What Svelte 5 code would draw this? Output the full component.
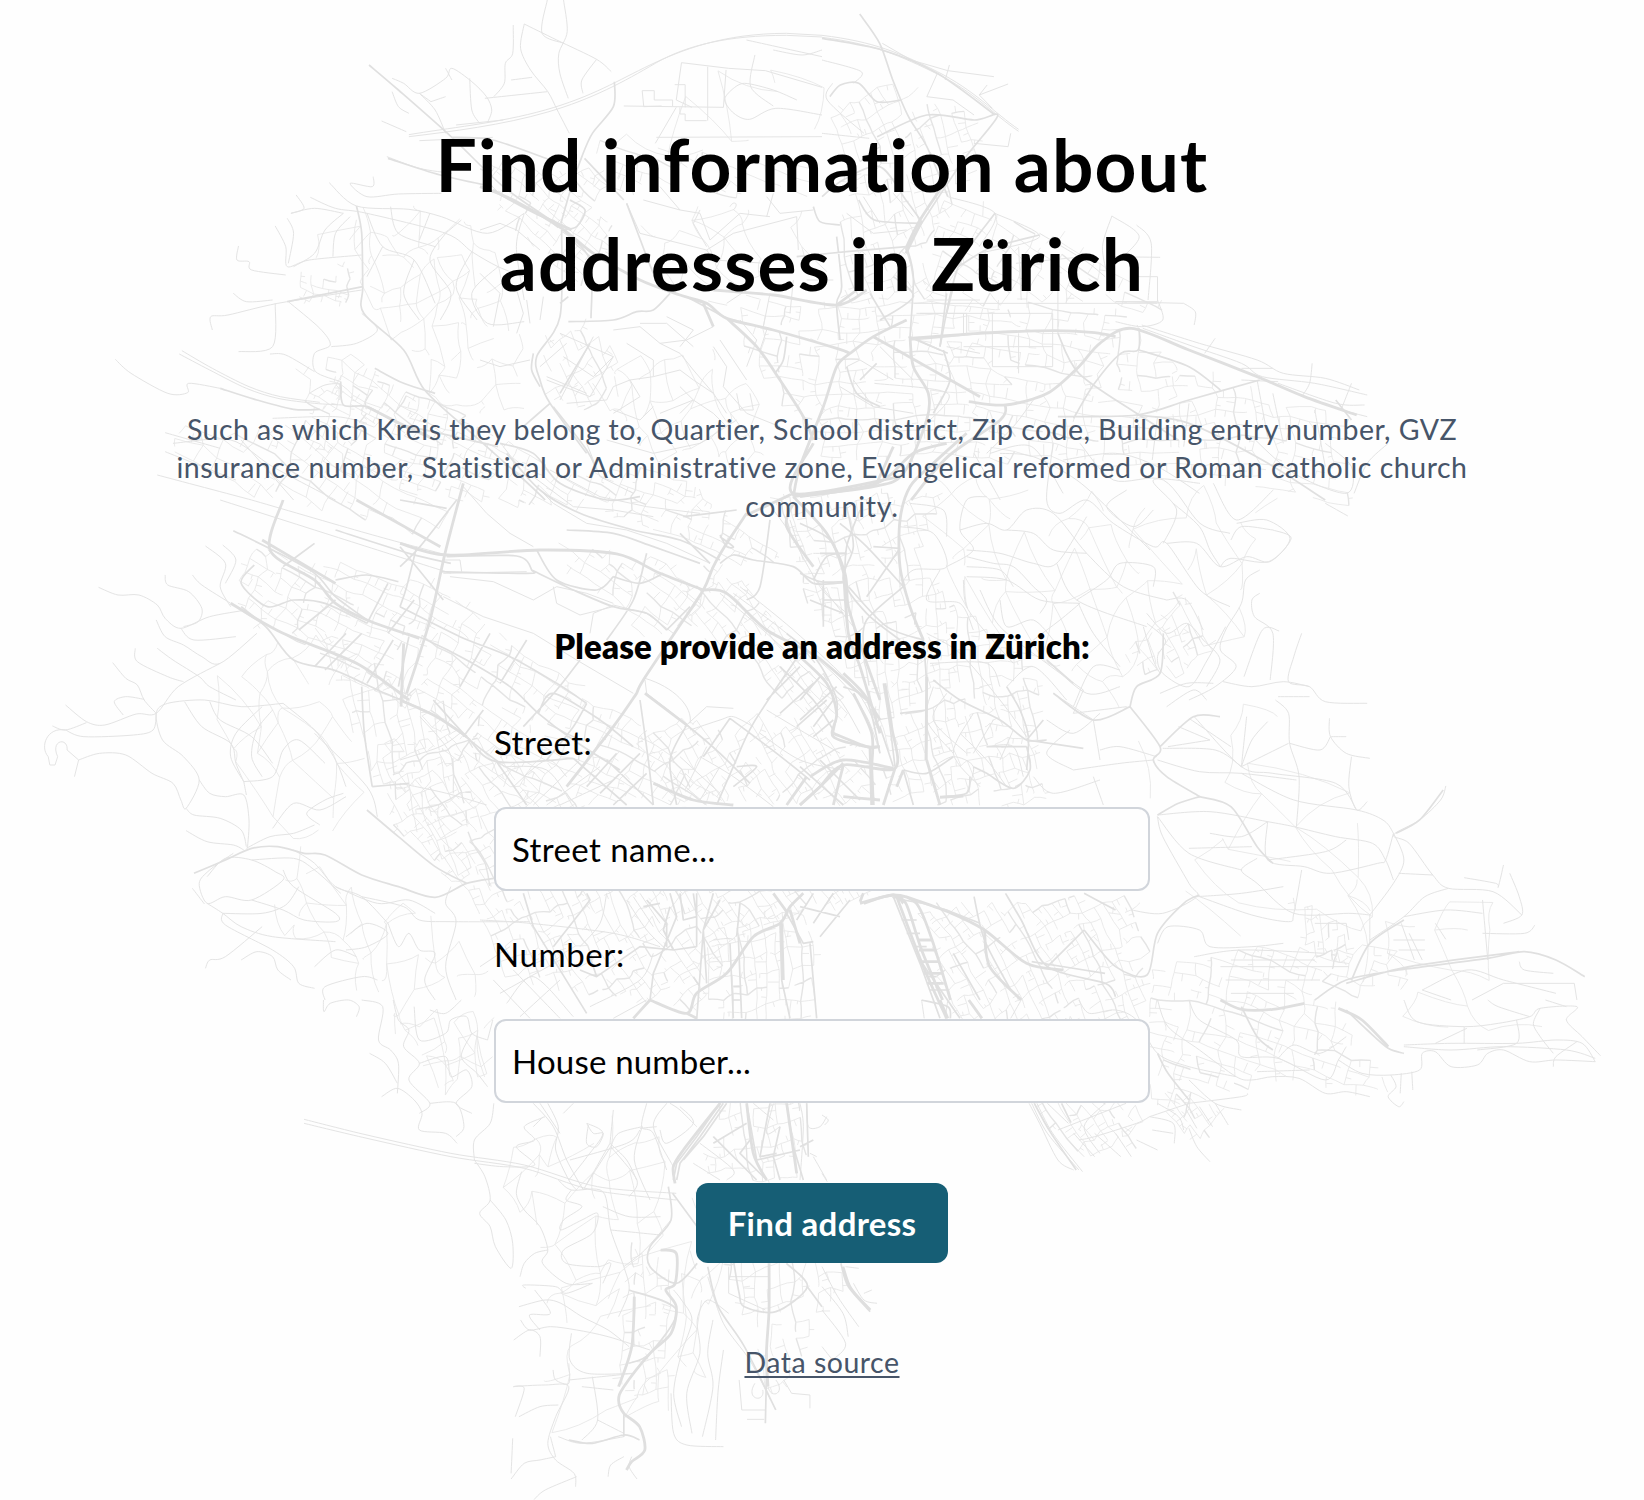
<script>
  // Deterministic noise, so the street web looks the same on every load
  let seed = 71;
  const rnd = () => {
    seed = (seed * 1664525 + 1013904223) % 4294967296;
    return seed / 4294967296;
  };

  const inside = (x, y, poly) => {
    let hit = false;
    for (let i = 0, j = poly.length - 2; i < poly.length; j = i, i += 2) {
      const [xi, yi, xj, yj] = [poly[i], poly[i + 1], poly[j], poly[j + 1]];
      if (yi > y !== yj > y && x < ((xj - xi) * (y - yi)) / (yj - yi) + xi) hit = !hit;
    }
    return hit;
  };

  // Fills a district with a loose mesh of lanes: step = block size, angle in degrees
  function district({ poly, step, ratio = 1.5, angle, jitter, keep, built }) {
    const xs = poly.filter((_, i) => i % 2 === 0);
    const ys = poly.filter((_, i) => i % 2 === 1);
    const cx = (Math.min(...xs) + Math.max(...xs)) / 2;
    const cy = (Math.min(...ys) + Math.max(...ys)) / 2;
    const r = Math.hypot(Math.max(...xs) - cx, Math.max(...ys) - cy);
    const nu = Math.ceil(r / (step * ratio));
    const nv = Math.ceil(r / step);
    const c = Math.cos((angle * Math.PI) / 180);
    const s = Math.sin((angle * Math.PI) / 180);
    const pts = [];
    for (let i = -nu; i <= nu; i++) {
      const row = [];
      for (let j = -nv; j <= nv; j++) {
        const u = (i + (rnd() - 0.5) * jitter) * step * ratio + Math.sin(j * 0.3) * step * 0.5;
        const v = (j + (rnd() - 0.5) * jitter) * step + Math.sin(i * 0.4) * step * 0.5;
        row.push([cx + u * c - v * s, cy + u * s + v * c]);
      }
      pts.push(row);
    }
    const out = { lanes: '', streets: '' };
    const link = (p, q, strong) => {
      const k = rnd();
      if (k > keep || !inside(p[0], p[1], poly) || !inside(q[0], q[1], poly)) return;
      const end = k > keep * 0.85 ? 0.6 : 1;
      const mx = (p[0] + q[0]) / 2 + (rnd() - 0.5) * step * jitter * 0.5;
      const my = (p[1] + q[1]) / 2 + (rnd() - 0.5) * step * jitter * 0.5;
      const ex = p[0] + (q[0] - p[0]) * end;
      const ey = p[1] + (q[1] - p[1]) * end;
      out[strong ? 'streets' : 'lanes'] +=
        `M${p[0].toFixed(1)} ${p[1].toFixed(1)}Q${mx.toFixed(1)} ${my.toFixed(1)} ${ex.toFixed(1)} ${ey.toFixed(1)}`;
      // short cul-de-sacs off the lane
      if (built && rnd() > 0.62) {
        const t = 0.3 + rnd() * 0.4;
        const side = (rnd() > 0.5 ? 1 : -1) * (0.3 + rnd() * 0.3);
        const bx = p[0] + (q[0] - p[0]) * t;
        const by = p[1] + (q[1] - p[1]) * t;
        out.lanes += `M${bx.toFixed(1)} ${by.toFixed(1)}l${((p[1] - q[1]) * side).toFixed(1)} ${((q[0] - p[0]) * side).toFixed(1)}`;
      }
    };
    for (let i = 0; i < pts.length - 1; i++)
      for (let j = 0; j < pts[i].length - 1; j++) {
        link(pts[i][j], pts[i + 1][j], built && j % 5 === 0);
        link(pts[i][j], pts[i][j + 1], built && i % 6 === 0);
      }
    return out;
  }

  // Rounds a surveyed polyline into a curve that still passes through its points
  function curve(d) {
    if (/[HVC]/.test(d)) return d;
    return d
      .split('M')
      .filter(Boolean)
      .map((part) => {
        const p = part.split('L').map((t) => t.trim().split(' ').map(Number));
        let s = `M${p[0][0]} ${p[0][1]}`;
        for (let i = 0; i < p.length - 1; i++) {
          const a = p[i - 1] ?? p[i];
          const b = p[i];
          const c = p[i + 1];
          const e = p[i + 2] ?? c;
          const k = 0.15;
          s += `C${b[0] + (c[0] - a[0]) * k} ${b[1] + (c[1] - a[1]) * k} ${c[0] - (e[0] - b[0]) * k} ${c[1] - (e[1] - b[1]) * k} ${c[0]} ${c[1]}`;
        }
        return s;
      })
      .join('');
  }

  const wood = (angle, step, poly) => ({ poly, step, angle, jitter: 0.9, keep: 0.8, ratio: 1.4 });
  const town = (angle, step, poly) => ({ poly, step, angle, jitter: 0.45, keep: 0.8, built: true });

  const districts = [
    wood(75, 16, [330, 195, 390, 195, 470, 215, 500, 330, 500, 400, 430, 400, 370, 330, 340, 280]),
    wood(60, 22, [275, 215, 350, 190, 345, 250, 280, 260]),
    wood(20, 40, [430, 90, 590, 85, 700, 40, 860, 60, 800, 150, 560, 150, 420, 130]),
    wood(40, 24, [600, 195, 790, 190, 800, 280, 640, 285]),
    wood(65, 18, [540, 340, 690, 330, 760, 430, 720, 470, 580, 430]),
    wood(55, 28, [870, 450, 1280, 465, 1240, 510, 1215, 560, 1190, 610, 1110, 640, 1080, 720, 960, 620, 880, 540]),
    wood(20, 40, [1080, 690, 1200, 640, 1280, 700, 1320, 790, 1330, 840, 1300, 900, 1120, 900, 1100, 780]),
    wood(10, 34, [1270, 830, 1430, 860, 1430, 940, 1500, 960, 1510, 1010, 1330, 1000, 1250, 930]),
    wood(50, 26, [170, 640, 300, 600, 350, 650, 370, 800, 270, 800, 190, 700]),
    wood(70, 22, [240, 830, 300, 800, 420, 870, 480, 900, 470, 1070, 410, 1060, 370, 990, 290, 930]),
    wood(80, 18, [370, 960, 480, 960, 480, 1080, 410, 1050]),
    wood(80, 25, [470, 1060, 650, 1060, 640, 1180, 600, 1280, 520, 1250, 480, 1150]),
    wood(70, 36, [500, 1230, 660, 1160, 690, 1260, 660, 1370, 490, 1370]),
    wood(80, 20, [640, 1170, 690, 1180, 690, 1330, 640, 1330]),
    town(25, 10, [280, 350, 380, 360, 540, 450, 640, 440, 760, 540, 700, 540, 560, 490, 420, 480, 290, 440]),
    town(30, 15, [170, 400, 290, 400, 430, 490, 420, 520, 250, 480, 160, 440]),
    town(30, 11, [215, 550, 230, 520, 300, 530, 420, 560, 600, 680, 700, 770, 470, 770, 390, 680, 240, 600]),
    town(32, 11, [500, 510, 700, 540, 660, 600, 620, 625, 580, 570]),
    town(50, 9, [650, 560, 700, 540, 810, 670, 820, 700, 740, 670, 720, 630, 660, 620]),
    town(55, 10, [640, 680, 700, 690, 740, 670, 840, 720, 840, 770, 640, 770, 600, 700]),
    town(4, 12, [670, 280, 1080, 290, 1100, 330, 1180, 360, 1290, 400, 1290, 490, 1200, 470, 1100, 450, 900, 440, 780, 440, 720, 350]),
    town(70, 11, [790, 100, 850, 70, 950, 120, 950, 140, 880, 240, 900, 290, 800, 290, 800, 190]),
    town(28, 12, [890, 190, 940, 190, 1100, 270, 1110, 300, 880, 290]),
    town(35, 9, [450, 150, 580, 160, 590, 230, 560, 290, 470, 200]),
    town(60, 11, [515, 320, 560, 300, 600, 340, 560, 400, 520, 380]),
    town(20, 14, [560, 130, 780, 150, 780, 190, 580, 190]),
    town(80, 10, [730, 470, 900, 470, 880, 540, 990, 640, 1000, 770, 850, 770, 830, 680, 760, 560]),
    town(60, 10, [360, 700, 470, 700, 560, 770, 850, 770, 840, 860, 700, 900, 670, 970, 480, 940, 440, 850, 370, 800]),
    town(75, 12, [290, 590, 420, 660, 480, 850, 430, 840, 350, 740]),
    town(86, 11, [660, 880, 780, 860, 778, 960, 770, 1060, 775, 1130, 660, 1130, 690, 1040]),
    town(62, 10, [870, 860, 1090, 850, 1100, 930, 1090, 1100, 1030, 1110, 960, 1040, 895, 940]),
    town(15, 12, [1080, 920, 1220, 900, 1340, 890, 1360, 940, 1270, 960, 1330, 1040, 1310, 1050, 1230, 1030, 1100, 1080]),
    town(60, 11, [1060, 620, 1120, 560, 1170, 600, 1140, 660, 1090, 650]),
    town(80, 12, [650, 1120, 775, 1130, 815, 1230, 770, 1290, 735, 1340, 700, 1240]),
    town(85, 11, [595, 1180, 640, 1200, 640, 1350, 590, 1330]),
    town(10, 8, [275, 255, 340, 250, 342, 290, 278, 298]),
    town(30, 11, [305, 330, 350, 340, 460, 440, 310, 390]),
    town(80, 8, [1230, 850, 1280, 880, 1290, 920, 1250, 920]),
    town(45, 9, [1110, 1040, 1170, 1050, 1160, 1095, 1110, 1078])
  ].map(district);

  const sheets = [
    {
      at: 'translate(0 0) scale(.52423 .33333)',
      fine: [
        'M1044 0L1034 100L1076 130M1075 0L1082 95L1066 160L1068 220L1084 295M979 75L978 160L964 190L962 250L942 290M1000 72L993 145L1012 210L1045 275L1063 330L1086 400M1000 72L1062 120L1138 178L1166 215M1138 178L1110 240L1112 280',
        'M748 235L770 250L800 280L850 235L862 205L900 245L928 290L938 330L930 368M748 275L760 320L780 340M850 205L862 240M800 280L830 330L850 400M728 363L775 395M800 280L822 305M925 295L1044 275M975 240L1015 232M822 305L850 290M896 235L900 330L915 370',
        'M780 404C850 385 950 370 1040 330S1180 240 1240 195S1380 100 1500 100L1568 106M780 410C860 395 960 375 1045 336S1190 245 1250 190S1390 106 1500 106L1568 111M800 422L940 412M870 375L960 360',
        'M1300 188L1390 205L1460 212L1568 262M1300 188L1290 300L1320 322M1350 200V362M1225 272L1228 320L1262 318M1225 272H1248V300H1283V318M1287 254H1307V322M1190 318L1380 322L1385 210M1297 322V342H1307V362H1348M1250 430L1290 322M1252 412L1568 410',
        'M1440 165L1432 260L1475 318M1395 270L1420 250L1475 270L1520 300M1395 270L1382 300L1400 340L1430 358L1480 325L1568 345M1424 120L1568 170M1475 150L1530 165L1568 150',
        'M738 470L800 505L862 520M712 530L710 560L668 550L700 590L760 582L842 580M628 548L680 618L780 628L842 650L930 700L1000 640M592 592L640 625L700 640L850 700L900 755L950 800L1000 830M565 585L580 625L555 640M548 655L560 700L550 790M525 678L545 740L548 800L590 780L690 765M555 640L600 625L655 640M655 640L620 690L600 760L560 800M668 650L640 700L635 770M455 738L452 780L475 785L480 810L545 825M445 880L470 905L520 900M405 990L402 950L435 945L530 910L690 870M525 910L520 1040L455 1055M550 905L610 985L630 1035L600 1060L602 1115L650 1145',
        'M700 640L730 740L790 780L830 910M730 740L700 830M790 780L770 880L800 960M850 700L820 780L860 880L840 960M900 755L870 860L910 960M950 800L900 880L930 970L1000 965M1000 640L985 740L1000 900M745 620L760 700L830 740M820 640L800 720M880 660L850 700',
        'M220 1078L250 1120L320 1180L358 1178L360 1150L420 1165M342 1062L400 1110L470 1165L530 1195L600 1210L655 1215M347 1052L405 1105L475 1160L535 1190L610 1207M590 1180L620 1155L650 1155L648 1200M515 1062L545 1065L600 1115M690 940L720 990L680 1030L632 1040',
        'M315 1298L420 1345M315 1355L450 1440M300 1425L480 1500M460 1320L560 1500M330 1330L440 1320L520 1400L640 1500M520 1255L640 1250L700 1270'
      ],
      mid: [
        'M704 195L760 270L862 412L960 560L1060 670M692 860L548 905M680 618L690 700L692 860L694 940L770 1050L810 1170L900 1300L1000 1440L1040 1500M1172 245L1170 320L1130 400L1110 470L1090 560L1070 670M1115 475L1190 600M420 1165L490 1200L560 1228L610 1228M650 1145L655 1215L700 1220L760 1270L840 1300L950 1340M862 412L940 420L1050 480M740 475L840 525L940 560',
        'M715 1105L770 1150L830 1180'
      ],
      main: ['M940 570L1010 630L1090 690M700 1220L760 1268L830 1320']
    },
    {
      at: 'translate(822 0) scale(.52423 .33333)',
      fine: [
        'M0 106C100 125 150 160 220 215S330 340 375 388M0 112C100 132 150 168 220 222S325 340 375 394M115 130L170 180L240 212L328 230M243 195L235 240M355 252L300 285L315 255M300 285L325 325M220 220L200 290L250 300L290 345M360 400L355 440L290 430',
        'M20 250L10 300L80 400M0 180L75 215L60 250M0 400L90 415M240 590L330 640L300 740M330 640L415 710L300 760M415 700L500 780L540 830M553 648L535 740L545 830M553 648L605 710L560 790M600 675L628 730L622 900M545 770L645 772M690 910L712 935L710 975M640 900L650 960L610 980L560 965M370 790L500 770M375 740L380 900',
        'M600 830H640V905H560L690 910M180 940H440M270 940V1000M325 940V1100H440V940M270 1040H440M175 910H640M450 870V1000M375 1000V1120M800 1105H860',
        'M610 975L720 1030L830 1080L880 1120L960 1135L1025 1170M612 985L700 1035L800 1090L840 1130L940 1150L1040 1185M750 1015L730 1060M935 1090L930 1150L915 1190M800 1140L870 1145M1010 1150L990 1230M990 1230L1040 1250M870 1150L980 1210L1035 1215M100 1150L240 1180L200 1270',
        'M320 1360L400 1340L460 1480M290 1360L340 1500M460 1380L560 1360L640 1400L720 1480M960 1330L1010 1400L1000 1480L900 1420L820 1310M1080 1330L1040 1390L1015 1480M860 1180L880 1330M940 1230L960 1400M700 1210L690 1340M640 1250L630 1380M830 1140L850 1310'
      ],
      mid: [
        'M72 42L110 130L135 240L165 350L200 440L240 590M0 115L115 150L220 220L330 345M105 410L200 345L290 360L335 348L270 480L190 670L160 750M15 290L35 255L70 250L105 305L150 300M0 590L40 540L110 500L160 600L190 665M70 600L100 660L190 670M165 1010L240 1060M330 640L260 800L225 1040M415 705L320 745L260 800M605 985L603 1050L570 1060L520 1150L480 1255M605 1050L700 1100L760 1170M450 1000L490 1120L600 1240L680 1320M835 1140L700 1200L600 1245L450 1250',
        'M600 1245L700 1270L840 1380L960 1500M980 1200L1010 1260'
      ],
      main: [
        'M280 1205L350 1215L430 1180L490 1100L530 1030L590 985L700 1050L830 1130L920 1190L1020 1245M170 1015L300 1000L440 992L520 998L560 1010M350 1215L340 1260L240 1370L170 1500M190 665L160 760'
      ]
    },
    {
      at: 'translate(0 500) scale(.52423 .33333)',
      fine: [
        'M188 262L225 285L265 285L300 315L315 355L345 385L400 350L470 330M315 225L320 255L360 275L385 325L378 365L350 380M367 225L385 255L440 310M392 138L430 190L420 260L440 320M425 135L450 180L430 250M298 360L315 410L350 435L385 470L420 490L490 400M258 445L262 485L320 530L350 545M300 445L330 480L380 530L400 560L450 600M215 488L240 535L262 555L275 600L298 640M345 385L370 420L450 410',
        'M125 615L165 665L200 675L260 642L298 640L340 560L420 490M165 668L125 690L100 678M275 598L240 590L218 605L235 645M125 690L160 710L255 705L292 690L298 640M150 780L190 760L240 765L290 820L330 850L345 900L355 925L380 840L350 770L310 720L298 640L320 610L390 600L460 620L540 610',
        'M125 690C90 680 75 740 92 770L95 795L105 795L110 770C95 720 130 710 128 750L150 780L142 830',
        'M355 925L370 945L420 955L460 990L470 1040M380 840L400 880L430 890L465 885L475 960L472 1045M352 605L385 680L440 730L450 790L465 845M400 605L420 660L480 710L520 790M465 845L440 770L450 700L500 620M465 845L520 830L540 750L570 720L620 790M465 845L470 885M520 630L490 690L480 770L500 830M540 610L600 690L640 780L660 860M355 992L395 1025L445 1035L465 1050M600 975L560 1000L515 1010L470 1045M520 985L560 910L610 930L660 890M610 975L585 940L620 900L655 880',
        'M445 1060L400 1110L380 1150L395 1210L430 1190L480 1200L540 1140L525 1115L480 1080L430 1075L395 1130M367 1165L390 1212M395 1210L425 1240L460 1280L520 1310L640 1325M540 1110L560 1160L640 1240L640 1265L580 1260L540 1230L480 1200M425 1240L500 1240L545 1215L570 1160M425 1240L430 1275L520 1350L560 1400L570 1450L600 1465M500 1280L430 1370L400 1380L392 1405M460 1380L490 1355L520 1370L530 1410L555 1440M560 1050L600 1090L640 1160L690 1190L740 1270M480 1080L560 1075L600 1110L650 1180',
        'M600 1400L640 1350L680 1370M620 1500L620 1460L690 1430L720 1440M660 1310L700 1270L740 1300L700 1340L660 1350M740 1270L760 1340L780 1300L800 1350L830 1360L810 1440L830 1500M690 1190L770 1220L800 1260L860 1265L1010 1265M640 1160L720 1210L780 1200L830 1240',
        'M420 0L600 90L780 180L860 220M480 0L700 100L840 160M600 700L700 860L720 950M860 1160L850 1210L870 1265L850 1400L870 1500'
      ],
      mid: [
        'M445 92L520 150L600 220L640 290L700 360M460 320L510 385L560 480L640 512L720 570L780 610L850 665L920 750L950 785M485 195L460 250L510 320L560 300L620 310L700 370M640 90L780 160L860 190M640 240L700 225L760 245M690 400L620 510M740 250L700 370M790 300L740 400M690 560L695 700L710 860M710 860L780 850',
        'M370 1120L430 1080L480 1045L530 1040L580 1060L620 1065L690 1125L760 1160L830 1192L890 1150L942 1135M700 930L760 1010L830 1100L890 1150M540 200L600 130M570 390L640 300M600 500L660 400M780 410L760 560M700 550L750 420'
      ],
      main: [
        'M540 0L515 150L600 240L640 310L700 360L800 415M500 120L640 250M680 0L760 70L840 140M770 430L765 620M440 310L540 400L680 490L780 600'
      ]
    },
    {
      at: 'translate(822 500) scale(.52423 .33333)',
      fine: [
        'M1003 48L960 10M860 90L800 80L780 120M760 200L780 175L852 185L895 115L860 90M670 10L720 80L740 150L760 200',
        'M835 210L808 240L800 310L770 390L760 450L790 500L750 560L700 600M835 280L820 300L825 350L860 400L855 540M872 393L840 390L805 530M915 400L900 470L890 545L930 560L960 605L1040 610M765 545L820 560L880 545L930 560M870 590L930 590M865 600L890 640L892 730L910 830L905 980M968 655L970 710L1000 760L1045 775M970 710L950 750L892 730M1000 710L970 710M1010 770L1005 860L1020 930L1040 905M770 380L735 480L700 560L650 520L640 470L655 420L620 370',
        'M710 650L800 800L860 820L980 850L1020 930M800 800L820 720L850 665M800 800L810 650M800 800L890 730M640 780L720 815L800 820L905 840M650 745L750 750L800 800M660 740L740 720M680 680L740 720M700 655L780 740M800 820L900 900L1020 930L1070 960L1090 1000L1110 1080L1090 1150L1045 1245M640 945L740 935L850 965L900 980L980 1010L1050 1030L1075 1080L1090 1140M850 965L850 1080L920 1100L970 1120L1060 1090L1075 1080L1090 1000M850 1080L960 1055L1000 1020',
        'M1190 858L1180 900L1140 960L1090 1005L1120 1030L1165 1125L1195 1165L1280 1175L1335 1245M1165 1125L1100 1120M1225 1133L1285 1150L1290 1160L1300 1095M1312 1120L1330 1190L1335 1245L1300 1270M1195 1165L1150 1190L1110 1250L1045 1320M1110 1250L1190 1230L1260 1240M1260 1200L1270 1380M1360 1275L1340 1300L1260 1300M1045 1245L1005 1240L900 1240L830 1150L800 1110L830 1075M1190 1318L1170 1270M1045 1245L1045 1330M720 1190L820 1245L890 1265L900 1240L915 1110M640 950L700 1060L800 1110M740 1000L800 1010L850 965M700 1045L820 1040',
        'M640 950L650 1010L700 1150L715 1190L650 1240L590 1230M715 1190L800 1180L880 1160M640 1330L660 1280L720 1290L740 1340L820 1340L880 1330M710 1370L800 1350L960 1360M1145 1470L1230 1410L1300 1440L1400 1480M1145 1470L1200 1500M1330 1385L1340 1410L1395 1420',
        'M780 1380H940M760 1400H1005M770 1440H950M780 1480H900M940 1270H1000L1005 1320M1240 1500L1300 1450H1435L1440 1500M1105 1270L1130 1380M1120 1300L1145 1380M1090 1320H1150M1100 1350H1150'
      ],
      mid: [
        'M720 890L780 920L830 1040L860 1090M1095 1000L1140 960L1185 870M640 945L680 910L720 890M500 1180L560 1230',
        'M290 1190L310 1320L360 1470M350 1180L380 1260L430 1400L540 1450L560 1490M500 1290L430 1400M500 1290L560 1400L620 1425L640 1300L690 1210L720 1185M400 1385L540 1420M940 1500L1000 1440L1100 1410L1270 1375L1340 1355L1400 1380L1455 1430M1000 1450L1120 1400L1330 1355M1010 1440L1045 1330L1110 1260'
      ],
      main: [
        'M135 1190L160 1210L190 1350L230 1500M80 1210L135 1185L180 1210L210 1320L245 1500M160 1190L240 1235L310 1290L390 1390L460 1410M310 1290L320 1400L380 1500',
        'M190 1385H225M195 1420H230M185 1350H215M183 1320H210M200 1450H232'
      ]
    },
    {
      at: 'translate(0 1000) scale(.52423 .33333)',
      fine: [
        'M617 0L618 35L630 10L665 0L685 20L680 50M690 0L730 20L722 120L745 150L760 190L758 280M705 160L735 190L758 250M728 290L758 265L790 300L805 340L800 390L850 400L872 430M750 0L760 60L780 90L770 140L800 190L780 240L820 310L800 340M820 30L850 40L880 0M790 20L800 120L850 100L860 60L890 50L900 100L930 120M800 190L850 170L860 230L890 210L900 260L870 310L900 340M820 310L870 310L885 380L870 410M930 120L940 60M900 100L880 170L910 220L930 260',
        'M580 358L700 405L860 460L1000 495L1140 560L1290 580M580 370L700 415L860 470L1000 505L1130 570L1290 600M905 480L905 420L935 370L942 310M905 480L925 530L935 600L915 640L935 680L945 740L975 805L978 730L965 660L935 600M905 490L960 500L1020 495L985 440L1020 420L1000 380L1040 350M1045 310L1065 380L1060 450L1085 540L1100 570M1120 370L1150 400L1120 470L1085 540M1165 440L1215 540L1200 590M1165 440L1180 400L1225 380M1165 440L1120 550M1225 380L1210 480L1240 600',
        'M995 515L985 580L1000 630L1030 680L1045 750L1035 790L1080 850L1130 850M1065 540L1090 570L1150 575L1165 690L1190 800L1200 870L1180 950M1090 570L1080 600L1110 620L1075 660L1070 690L1110 660L1140 640L1130 700L1075 750L1080 790L1140 800L1165 790L1150 850M1165 690L1260 705M1150 620L1200 650L1260 650M1280 660L1230 750L1190 800M992 830L1000 790L1020 760L1045 750M1003 865L1000 855L1060 860L1080 880L1130 850M990 920L1040 900L1070 910L1110 950L1160 990L1200 1040M993 960L1010 990L1050 980L1100 990L1160 1010L1240 1050M980 1020L1010 990L1030 1010L1030 1070M1020 870L1050 940L1010 945L1030 990',
        'M1090 1000L1087 1080L1120 1120L1210 1120M1055 1110L1060 1140L1085 1150L1085 1090M983 1250L1000 1165L980 1160L1040 1155L1085 1160L1060 1250L1045 1330L1060 1380L1095 1420L1098 1460M990 1250L1030 1220L1065 1215M1085 1140L1210 1120M1065 1310L1110 1330L1190 1310M1130 1130L1140 1260L1110 1320M1140 1260L1190 1300M978 1315L975 1420M975 1437L1000 1390L1030 1380L1060 1370M1018 1500L1040 1470L1100 1430M1110 1160L1170 1170M1050 1310L1060 1370M1160 1430L1165 1395L1190 1370M1205 1370L1200 1400L1215 1437',
        'M1280 1180L1285 1300L1310 1335L1380 1340M1300 1280L1285 1180L1300 1060L1320 960L1300 900L1285 870M1320 1300L1310 1180L1335 1060L1330 960L1350 900L1390 940M1340 1310L1360 1160L1350 1060L1360 960M1380 1050L1370 1170L1365 1320M1350 830L1380 970L1430 1080L1470 1200',
        'M1410 1140L1415 1230H1460M1425 1258H1458M1390 800V880L1460 930M1390 830H1468M1440 1150C1420 1200 1460 1210 1455 1170M1480 1140C1500 1180 1470 1200 1465 1160M1495 1140L1510 1180L1545 1185V1225'
      ],
      mid: [
        'M1275 560L1280 660L1240 740L1240 800L1290 850L1330 790M1283 580L1330 680M1350 800L1370 920L1420 1040L1480 1230M1400 790L1410 880L1420 920L1480 935L1540 860L1500 790M1540 860L1568 920M1200 1090L1240 1060L1290 930L1200 870',
        'M1085 1320L1130 1330L1190 1305L1220 1320M1190 1240L1190 1310M1463 1060L1460 1270'
      ],
      main: [
        'M1260 750L1290 760L1288 850L1270 870L1290 920L1280 1000L1240 1060L1190 1160L1180 1200L1190 1240L1220 1280L1230 1350L1205 1385L1195 1410M1210 890L1205 1040L1180 1160M1467 790L1467 930L1462 1060L1465 1160',
        ''
      ]
    },
    {
      at: 'translate(822 1000) scale(.52423 .33333)',
      fine: [
        'M190 0L195 55M240 0L235 55M380 0L360 55M490 0L510 40L560 30L600 60L640 160L700 200L790 230M640 0L660 80L720 150L790 230L820 240L860 230L910 235L960 280L1000 275L1045 290M700 0L720 60L790 120L800 170L870 175L960 240L985 180L1000 140M870 175L900 135L950 160L1000 110M830 215L930 210M985 180L1030 220L1085 225L1140 210L1145 160L1170 155L1200 200L1250 195L1270 160L1300 150L1350 185L1400 180L1475 185',
        'M1110 0L1135 65L1225 80L1290 70L1350 50L1370 25L1440 20L1420 60L1450 110L1485 167M1370 25L1357 70L1370 110L1395 160M1350 50L1290 20L1270 0M1325 60L1325 130L1250 150M1110 135L1200 130L1325 130L1400 120L1450 130L1475 185M1225 80L1225 130M1110 140L1200 150L1300 140L1420 150L1475 175M1395 200L1400 170L1440 125M1170 130L1230 85M1380 0L1420 20M1085 225L1095 260L1080 290L1100 320L1110 305M1105 220L1103 280M1125 215L1127 270',
        'M700 240L750 310L800 330M700 310L800 290L812 280M625 350L600 370L520 410L490 420M625 350L700 310M625 350L670 370L672 430M560 400L590 470M520 400L570 470M480 400L520 470M600 420L640 450M700 385L715 440L740 485M750 310L775 375M720 320L745 380M695 330L715 385M640 310L680 350L690 390M630 390L670 400M540 310L500 380L530 460M0 345L12 360L5 375M0 520L10 545',
        'M400 310L430 400L490 510M410 310L440 400L497 515M395 310L415 370L450 480L480 510M430 310L470 370M450 390L580 310M475 430L500 470M0 800L30 890L70 980M0 860L40 940L50 1010M0 930L45 1030L20 1080M70 805L45 800M60 850L80 900L105 910M95 870L80 880M0 1040L20 1080'
      ],
      mid: [
        'M405 310L435 395L485 510M457 310L475 368M640 160L660 220L700 300M1000 30L1040 90L1080 145L1110 160M800 20L830 110L860 150M190 0L240 20L245 55M36 790L50 860L92 935'
      ],
      main: ['M225 0L240 55M280 0L305 55M760 0L800 28L860 28L920 10M985 25L1030 60L1080 140M40 800L55 865L92 930']
    },
    {
      // west of the river
      at: 'translate(400 400) scale(.33333)',
      fine: [
        'M310 140L380 230L460 310L560 370L680 390L800 430L930 490M190 260L260 340L330 400L400 440M130 480L180 480L185 515M130 520L380 515M150 530L280 545L400 600L470 560L560 580L640 610M460 560L470 610L540 645L640 620M130 590L250 650L400 700L530 780L700 880M570 700L580 640L640 615L740 640L820 700M735 835C820 860 880 920 870 970M735 840L740 880L830 950M860 975L920 920L1000 925M400 230L520 320L640 330L760 350M450 210L600 290L740 320L900 340M560 130L600 230L700 280M620 120L760 160L900 130L1010 60M640 30L720 60L760 20',
        'M960 580L1100 700L1240 830L1320 900L1380 1000M1000 580L1160 700L1320 840L1400 950L1440 1060M1020 560L1180 690L1360 860L1430 980M870 990L960 960L1000 950L1060 980M1100 930L1200 990L1320 1060M1080 1000L1200 1080L1330 1110M900 1070L1000 1130L1120 1220M920 1040L860 1160M960 1100L900 1200M840 1070L960 1180M820 1130L920 1215M310 1100L440 1110L520 1220M340 1160L440 1080L500 1130M400 1215L540 1080M440 1215L600 1100M480 1215L640 1140M0 1150L140 1180L260 1215M0 1080L120 1040L180 1000M60 950L150 1060L160 1180M1120 330L1170 400L1260 560L1340 640M1170 360L1210 480M1240 460L1330 460M1250 540L1360 680'
      ],
      mid: [
        'M460 20L560 150L590 210M300 130L400 160L480 250L620 300L720 290M320 160L420 270L540 340L700 390L840 420L960 480M500 390L640 400L760 440L900 490M140 470L350 468L395 510L380 520L120 515M395 510L520 570L640 620L740 640L800 690M410 450L470 540L590 570L640 530M640 530L720 550L790 520M740 460L700 600L620 720M800 690L870 620M840 400L930 490M850 350L1010 330M960 490L1000 465L1060 480L1180 500L1240 550L1330 548M960 410L1000 440L980 440L960 405M1110 360L1080 560L1040 600M1270 540L1270 650M1230 600L1330 640M1240 540L1280 470L1340 460',
        'M20 700L80 720L200 780L330 860L415 940L520 1020L660 1110M0 620L180 710L330 770L470 850L560 910M380 720L300 850M270 700L180 860M540 780L470 870L370 980M560 910L520 980L440 1080M415 940L460 880L600 960L700 1040M100 900L200 1010L290 1085L520 1075M190 1010L250 930M290 1085L380 1215M520 1075L680 1215M620 1080L760 1215M560 1160L650 1060M600 1180L720 1060M640 1215L740 1120M720 900L745 1080L760 1215M735 880L860 975L960 1060L1050 1150M860 975L810 1080L830 1215M990 955L910 1070M990 955L1130 1060L1230 1140M1200 760L1060 970L1000 1100L950 1215M1140 800L1240 900L1300 990M1200 800L1100 900M1240 850L1140 940M1280 900L1190 980M1300 960L1240 1010M1160 700L1250 780L1310 900L1300 1000M1200 1100L1330 1215M1260 1080L1380 1200M1010 1100L1070 1100L1000 1160',
        'M1340 320L1360 440L1330 540L1400 640L1500 720M1440 980L1480 1100M1330 860L1400 900L1440 1060M0 440L130 600M0 500L60 440L170 300M0 300L140 325M50 440L20 560L0 620'
      ],
      main: [
        'M190 250L135 460L90 660L20 880M0 430L140 465L420 450L650 462L780 520L910 570M910 570L980 580L1100 690L1250 770L1400 900M1040 340L980 430L940 500L910 570L830 690L730 840L710 880M1240 130L1180 280L1500 230M1180 280L1040 345M1180 290L1280 400L1335 520L1345 620L1390 760L1440 900M1180 310L1160 380L1240 500M710 880L640 980L500 1160M735 880L860 975M760 1150L880 1200L1000 1215M1300 1000L1400 1040L1435 1040M1220 1130L1160 1215M1230 1130L1330 1080L1480 1105M1330 1090L1260 1160L1200 1215M1410 1040L1415 1215M1330 1190L1440 1200M0 900L110 950L200 1010'
      ]
    },
    {
      // east of the river
      at: 'translate(800 400) scale(.33333)',
      fine: [
        'M700 0L640 80L560 160M600 160L700 170L830 240L940 340L1050 450M480 390L560 370L620 390L680 330L760 340L860 460L970 560L1100 600M620 390L700 400L760 450L860 460M500 450L600 460L700 490L770 490L860 350M770 490L830 600L1040 680M840 610L720 600L620 540L500 530M830 600L920 540L960 490L1060 500L1060 560M835 610L880 700L960 800M840 610L780 660L700 720M760 130L740 300L780 340L860 300L940 370L1060 440L1100 430L1200 570L1290 620M840 130L940 240L1090 240L1200 370L1290 400M1100 430L1190 430L1260 500L1340 470L1410 485L1470 415L1400 360L1310 370M1090 430L1130 330L1060 240L1200 250M1240 250L1310 360L1420 270M980 270L920 320L1000 380L1060 330M500 470L580 490L640 500L700 560L740 600L720 640M500 500L600 510L640 560M300 380L400 400L440 500L340 510L300 560M440 500L520 450L480 390L500 300L560 290M330 310L430 330L440 410',
        'M490 540L500 620L560 700L640 790M540 570L600 680L740 790L850 870M420 510L380 600L480 610L520 690M600 600L620 680L700 660L760 720M380 700L480 760L600 900L680 1010M390 790L560 790L600 860M620 860L700 800L800 900M740 780L860 880L960 860M760 880L880 960M820 920L880 800L960 810M850 870L820 940M820 940L980 920M880 960L900 1080M810 990L740 1060L820 1110M740 960L820 1000L900 940M820 1110L960 1090L1060 1080M700 1130L760 1180L900 1140M880 1130L910 1215M900 1050L960 1040L1070 1070M480 1000L560 1080L620 1160M520 940L460 1060L540 1160M400 860L380 960L460 1060M440 880L400 960L500 1060M400 1100L460 1070L520 1100L500 1180M560 1040L640 1040L670 1130M580 960L520 1060M640 990L600 1080M1030 680L1060 780L1080 820M1040 640L1100 700L1160 670L1210 720L1260 780L1220 860M1100 600L1160 600L1210 690M1080 880L1160 850L1240 850M1100 920L1180 870L1220 900'
      ],
      mid: [
        'M0 370L90 420L130 520M180 330L140 440L135 560L145 700M60 460L140 460M70 560L70 680M70 600L140 600M145 560L260 680L370 720M310 560L200 660L190 740M0 520L60 545L130 545M220 440L300 445M300 445L200 590M120 370L200 440L310 560M400 840L480 900L600 960L680 1020L740 1020M620 860L660 930L685 1010L680 1110M740 780L820 850M760 880L880 960L990 920M990 920L1080 1040L1060 1080L1100 1130L1200 1190M990 920L1010 860L1080 820L1090 700M1080 1040L1180 950L1260 950M460 1070L380 1120L310 1110M520 1100L560 1120L640 1165L690 1110L680 1040M370 720L380 860L380 1080M300 940L380 930M250 850L270 980L285 1100M420 1190L500 1180L510 1130M310 1110L340 1215M0 900L60 830M40 980L100 900M0 960L110 860M680 1020L850 1045M730 960L680 1020M560 1040L680 1040'
      ],
      main: [
        'M0 290L230 250L340 160L440 130M500 100L400 190L330 260L300 360L300 500L330 620L370 720M230 250L280 140M130 500L145 700L180 800L240 1000M0 770L80 850L110 940L100 1010L200 1040L240 1040M160 880L215 1000L215 1100M130 820L190 880L240 960M255 850L275 980L285 1105L130 1095L60 1160L0 1215M130 1095L100 1215M285 1105L250 1215M215 1100L220 1215M380 1080L420 1215M380 830L378 1080M310 1110L290 1160M420 1192L490 1188'
      ]
    },
    {
      // Wiedikon and Enge
      at: 'translate(480 880) scale(.33333)',
      fine: [
        'M0 120L150 130L400 160L540 200M380 40L360 130L300 200M440 60L500 150L560 210M460 50L520 140M480 40L540 130M0 260L90 200M60 340L240 240M80 370L160 290L280 410M120 410L240 300M40 300L150 415M100 270L240 415M330 380L480 300L520 220M400 415L500 360M700 180L760 180L740 250L700 240ZM690 370L680 200L750 60M700 400L690 200L770 70M710 415L700 180M720 415L705 200M860 60L800 160L790 260M940 200L1040 180M1020 290L1050 290L1050 360M1010 300L1020 415M1040 160L1130 90M820 180L830 415M860 280L850 415M930 240L900 415M560 40L600 100L560 200M1320 260L1320 390M1360 80L1500 200M1330 130L1500 150M1440 200L1400 250M1480 230L1430 290',
        'M160 670L220 740L260 840L310 930M250 700L280 670M320 730L340 760L370 760L350 800L320 790L325 735M390 790L440 840L470 900M390 790L310 930M390 790L400 690M480 750L440 790L270 840M500 670L485 740L520 760L560 870M560 670L520 740L580 860M540 750L560 790L640 730L600 680M570 670L600 690L650 740M480 745L530 740M180 670L240 760M160 740L190 710M820 670L880 720M880 670L860 760L900 740M960 670L970 740L960 900M980 670L985 740L1020 740L1040 710M1000 830L1040 900M990 820L1010 830M640 850L720 900M660 790L760 870L740 900M700 770L760 830'
      ],
      mid: [
        'M130 40L160 140L320 400M320 40L330 60L220 200M300 270L350 290L480 200L580 210M350 290L330 230M500 60L560 130L560 200M600 40L610 120L650 110L640 40M570 80L550 150L580 210L650 200M650 40L650 200M490 80L540 70M640 290L660 320M570 40L590 110L520 280L510 360M750 190L760 415M775 170L785 415M760 320H780M760 360H780M900 130L905 300L930 415M990 190L1010 415M960 80L1080 110M1000 40L950 120M1060 40L1000 130M1110 60L1020 170M780 70L770 170M920 100L970 190L1000 185M650 420L670 150L700 40M680 310L670 150L720 60M1270 60L1330 70L1400 90L1500 130M1240 50L1320 250L1380 415M1320 240L1440 415M1420 220L1500 360',
        'M1265 120H1310M1280 160H1320M1300 200H1340M1340 290H1370M1350 330H1400M800 670L830 840M870 670L840 830L890 820M830 840L960 810M800 730L700 790M700 770L830 900M810 780L780 820L860 900M900 740L880 830L900 900M920 670L940 800L970 900M980 670L985 830M1000 780L960 800M720 670L650 770L590 850L580 900M730 670L660 770L600 850L590 900M740 670L670 770L610 840'
      ],
      main: [
        'M510 360L620 400L650 340L740 280L820 170L900 130L930 80L970 40M510 360L460 415M920 95L880 40M930 90L960 190M1140 70L1240 45L1270 70M1140 65L1150 40M1250 50L1330 260L1400 415M720 670L610 810L580 860L585 910M800 670L820 820L860 900M920 670L950 880M620 400L650 415M905 130L910 300'
      ]
    },
    {
      // between the northern hills
      at: 'translate(480 180) scale(.33333)',
      fine: [
        'M440 70L480 160L640 200L680 210M490 60L600 90L660 100L690 180L780 100L870 110M660 90L640 130L680 200M680 210L760 160L950 110M680 210L700 240L860 250M540 20L600 90M860 50L900 100L1000 90M880 40L860 110M950 110L955 210M750 80C760 60 780 70 760 90M0 150L60 130L110 150L180 210M0 280L60 340L40 440M110 330L130 400L110 460M140 360L150 430M190 350L180 420M0 540L60 560L150 540M400 450L480 440L540 490L600 520L640 570L700 640M440 490L520 540L520 590L450 600M560 410L640 450L600 500M480 430L560 430L640 500M540 490L620 480L700 440M450 600L400 620L380 660L260 670M450 600L480 650L400 700M600 620L640 660L600 700M520 590L600 570L640 600L700 640L740 700M700 500L740 560L730 620L800 700L900 740M770 640L780 690L820 690L810 640M720 480L800 600M540 700L640 660L700 700L740 740M180 560L260 490M250 530L340 590L400 530M200 590L320 640M340 470L240 660M240 460L400 530L330 650L200 600',
        'M780 420L830 480L800 560M860 450L840 510M1060 300L980 300M940 300L930 400M870 340L850 440M740 370L800 330M1100 560L1140 540L1240 600M1080 620L1180 680L1300 700M1120 600L1180 680M1200 500L1300 600M1320 400L1460 400M1460 400V460M1340 360H1500M1400 500L1500 520M1100 100L1180 160L1280 150M1150 50L1200 130M1240 40L1300 110'
      ],
      mid: [
        'M270 60L315 90L290 140L245 150M245 150L240 410L170 530L180 600L210 670L320 820M250 150L330 240L333 415M265 350L240 370M265 425L400 420L470 395L520 390L570 340M160 520L155 570L180 620M330 490L240 640M210 670L130 740M440 70L500 230L520 280M1000 80L1020 125L1080 135M1070 170L1085 320L1070 370L1080 480M950 230L1100 215L1280 200M1280 200L1300 290L1290 470M1240 290L1300 350L1200 420M1170 340L1230 440M920 470L910 540L885 580M1100 560L1130 640L1200 680M1190 550L1140 600M1290 470L1380 510M1290 480L1400 470L1500 460M1390 510L1410 600L1360 700M1400 340L1380 500M1400 400L1420 320M740 415L620 350'
      ],
      main: [
        'M0 20L100 60L245 145L340 220L480 300L600 345L680 370L740 415L880 450L1070 505L1110 520M740 415L830 500L900 600L970 710L1000 780M700 330L880 345L1070 375L1160 330M1070 375L1130 330M1110 520L1180 470L1280 420M1110 520L1070 560L1030 680L960 860L940 950M1180 470L1340 560L1500 650M1290 470L1300 560L1345 640L1340 720L1270 880L1180 920L940 950M1400 0L1320 120L1280 200M670 370L700 440M680 370L600 345'
      ]
    }
  ].map((s) => ({
    at: s.at,
    fine: s.fine.map(curve),
    mid: s.mid.map(curve),
    main: s.main.filter(Boolean).map(curve)
  }));
</script>

<main>
  <svg class="map" viewBox="0 0 1644 1500" aria-hidden="true">
    <g transform="scale(1.04847 1.0482)">
      {#each districts as area}
        <path class="lane" d={area.lanes} />
        {#if area.streets}<path class="street" d={area.streets} />{/if}
      {/each}
    </g>
    {#each sheets as sheet}
      <g transform={sheet.at}>
        {#each sheet.fine as d}<path class="fine" {d} />{/each}
        {#each sheet.mid as d}<path class="mid" {d} />{/each}
        {#each sheet.main as d}<path class="artery" {d} />{/each}
      </g>
    {/each}
  </svg>

  <div class="content">
    <h1><span class="h-a">Find information about</span><br /><span class="h-b">addresses in Zürich</span></h1>

    <p class="intro">
      <span class="p-a">Such as which Kreis they belong to, Quartier, School district, Zip code, Building entry number, GVZ</span><br />
      <span class="p-b">insurance number, Statistical or Administrative zone, Evangelical reformed or Roman catholic church</span><br />
      <span class="p-c">community.</span>
    </p>

    <form onsubmit={(e) => e.preventDefault()}>
      <h2>Please provide an address in Zürich:</h2>
      <label for="street">Street:</label>
      <input id="street" class="street-field" type="text" placeholder="Street name..." />
      <label for="number" class="number">Number:</label>
      <input id="number" class="number-field" type="text" placeholder="House number..." />
      <button type="submit">Find address</button>
    </form>

    <a href="#source">Data source</a>
  </div>
</main>

<style>
  :global(body) {
    background: #fefefe;
  }
  main {
    position: relative;
    height: 1500px;
    overflow: hidden;
    font-family: Lato, 'Open Sans', sans-serif;
    font-variant-ligatures: none;
    color: #000;
  }
  .map {
    position: absolute;
    inset: 0;
    width: 1644px;
    height: 1500px;
    fill: none;
    stroke-linejoin: round;
  }
  .map path {
    vector-effect: non-scaling-stroke;
  }
  .lane {
    stroke: #e8e8e8;
    stroke-width: 0.9;
  }
  .street {
    stroke: #e4e4e4;
    stroke-width: 1.4;
  }
  .fine {
    stroke: #e4e4e4;
    stroke-width: 1;
  }
  .mid {
    stroke: #e0e0e0;
    stroke-width: 1.7;
  }
  .artery {
    stroke: #dfdfdf;
    stroke-width: 2.8;
  }
  .content {
    position: relative;
    display: flex;
    flex-direction: column;
    align-items: center;
  }
  h1 {
    margin: 115px 0 0;
    font-size: 73px;
    line-height: 99px;
    font-weight: 700;
    text-align: center;
    white-space: nowrap;
  }
  .h-a {
    letter-spacing: 1.2px;
  }
  .h-b {
    letter-spacing: 1.2px;
  }
  .intro {
    margin: 97px 0 0;
    font-size: 28.5px;
    line-height: 38.333px;
    color: #475569;
    text-align: center;
    white-space: nowrap;
  }
  .p-a {
    letter-spacing: 0.45px;
  }
  .p-b {
    letter-spacing: 0.5px;
  }
  .p-c {
    letter-spacing: 0.8px;
  }
  form {
    display: flex;
    flex-direction: column;
    width: 656px;
    margin-top: 97px;
  }
  h2 {
    margin: 0;
    font-size: 33px;
    line-height: 48px;
    font-weight: 800;
    letter-spacing: 0.17px;
    text-align: center;
    white-space: nowrap;
  }
  label {
    margin-top: 48px;
    font-size: 33px;
    line-height: 48px;
    letter-spacing: 0.45px;
  }
  label.number {
    margin-top: 39px;
    letter-spacing: 0.6px;
  }
  input {
    box-sizing: border-box;
    width: 656px;
    height: 84px;
    margin: 41px 0 0;
    padding: 0 16px;
    border: 2px solid #d1d5db;
    border-radius: 12px;
    background: #fefefe;
    font: 400 33px Lato, sans-serif;
    color: #000;
  }
  .street-field {
    letter-spacing: 0.4px;
  }
  .number-field {
    letter-spacing: 0.2px;
  }
  input::placeholder {
    color: #000;
    opacity: 1;
  }
  button {
    align-self: center;
    width: 252px;
    height: 80px;
    margin-top: 80px;
    padding: 0;
    border: 0;
    border-radius: 12px;
    background: #165e75;
    color: #fff;
    font: 700 33px Lato, sans-serif;
    letter-spacing: 0.3px;
  }
  a {
    margin-top: 80px;
    font-size: 28.5px;
    line-height: 38px;
    letter-spacing: 0.5px;
    color: #475569;
    text-decoration-thickness: 2px;
    text-underline-offset: 3px;
  }
</style>
